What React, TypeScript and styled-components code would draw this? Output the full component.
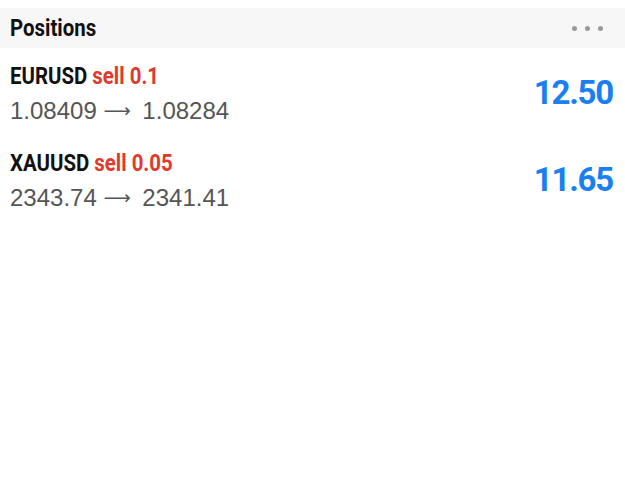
import React from "react";
import styled, { createGlobalStyle } from "styled-components";

const GlobalStyle = createGlobalStyle`
  html, body {
    margin: 0;
    padding: 0;
    background: #ffffff;
  }
  body {
    font-family: "Liberation Sans", Arial, sans-serif;
  }
`;

type Position = {
  symbol: string;
  side: string;
  volume: string;
  open: string;
  current: string;
  profit: string;
};

const positions: Position[] = [
  { symbol: "EURUSD", side: "sell", volume: "0.1", open: "1.08409", current: "1.08284", profit: "12.50" },
  { symbol: "XAUUSD", side: "sell", volume: "0.05", open: "2343.74", current: "2341.41", profit: "11.65" },
];

const App = () => {
  return (
    <>
      <GlobalStyle />
      <Page>
        <Header>
          <HeaderTitle>Positions</HeaderTitle>
          <MoreButton aria-label="more">
            <Dot />
            <Dot />
            <Dot />
          </MoreButton>
        </Header>
        <List>
          {positions.map((p) => (
            <Row key={p.symbol}>
              <Info>
                <Title>
                  <Symbol>{p.symbol}</Symbol> <Side>{p.side} {p.volume}</Side>
                </Title>
                <Prices>
                  {p.open} <Arrow>⟶</Arrow> {p.current}
                </Prices>
              </Info>
              <Profit>{p.profit}</Profit>
            </Row>
          ))}
        </List>
      </Page>
    </>
  );
};

export default App;

const Page = styled.div`
  padding-top: 8px;
  width: 625px;
  min-height: 486px;
  box-sizing: border-box;
`;

const Header = styled.div`
  height: 40px;
  background-color: #f7f7f7;
  display: flex;
  align-items: center;
  justify-content: space-between;
  padding: 0 22px 0 10px;
`;

/* no condensed face is installed, so squeeze Roboto bold */
const condensed = `
  display: inline-block;
  font-family: Roboto, "Liberation Sans", sans-serif;
  font-weight: 700;
  transform: scaleX(0.85);
  transform-origin: left center;
  white-space: nowrap;
`;

const HeaderTitle = styled.div`
  ${condensed};
  font-size: 24px;
  line-height: 28px;
  color: #111111;
`;

const MoreButton = styled.div`
  display: flex;
  gap: 8px;
  align-items: center;
`;

const Dot = styled.span`
  width: 5px;
  height: 5px;
  border-radius: 50%;
  background-color: #9a9a9a;
`;

const List = styled.div`
  display: flex;
  flex-direction: column;
`;

const Row = styled.div`
  display: flex;
  align-items: center;
  justify-content: space-between;
  padding: 15px 12px 10px 10px;
  height: 62px;
`;

const Info = styled.div`
  display: flex;
  flex-direction: column;
  align-items: flex-start;
  gap: 6px;
`;

const Title = styled.div`
  ${condensed};
  font-size: 24px;
  line-height: 26px;
  color: #111111;
`;

const Symbol = styled.span`
  color: #111111;
`;

const Side = styled.span`
  color: #e2392d;
`;

const Prices = styled.div`
  font-family: "Liberation Sans", Arial, sans-serif;
  font-size: 24px;
  line-height: 30px;
  color: #555555;
  white-space: nowrap;
`;

const Arrow = styled.span`
  font-family: "DejaVu Sans", sans-serif;
  font-size: 19px;
  vertical-align: 2px;
  margin-right: 5px;
  color: #555555;
`;

const Profit = styled.div`
  font-family: Roboto, "Liberation Sans", sans-serif;
  font-weight: 700;
  font-size: 33px;
  letter-spacing: -1.2px;
  color: #1a7ff2;
  margin-top: -3px;
`;
